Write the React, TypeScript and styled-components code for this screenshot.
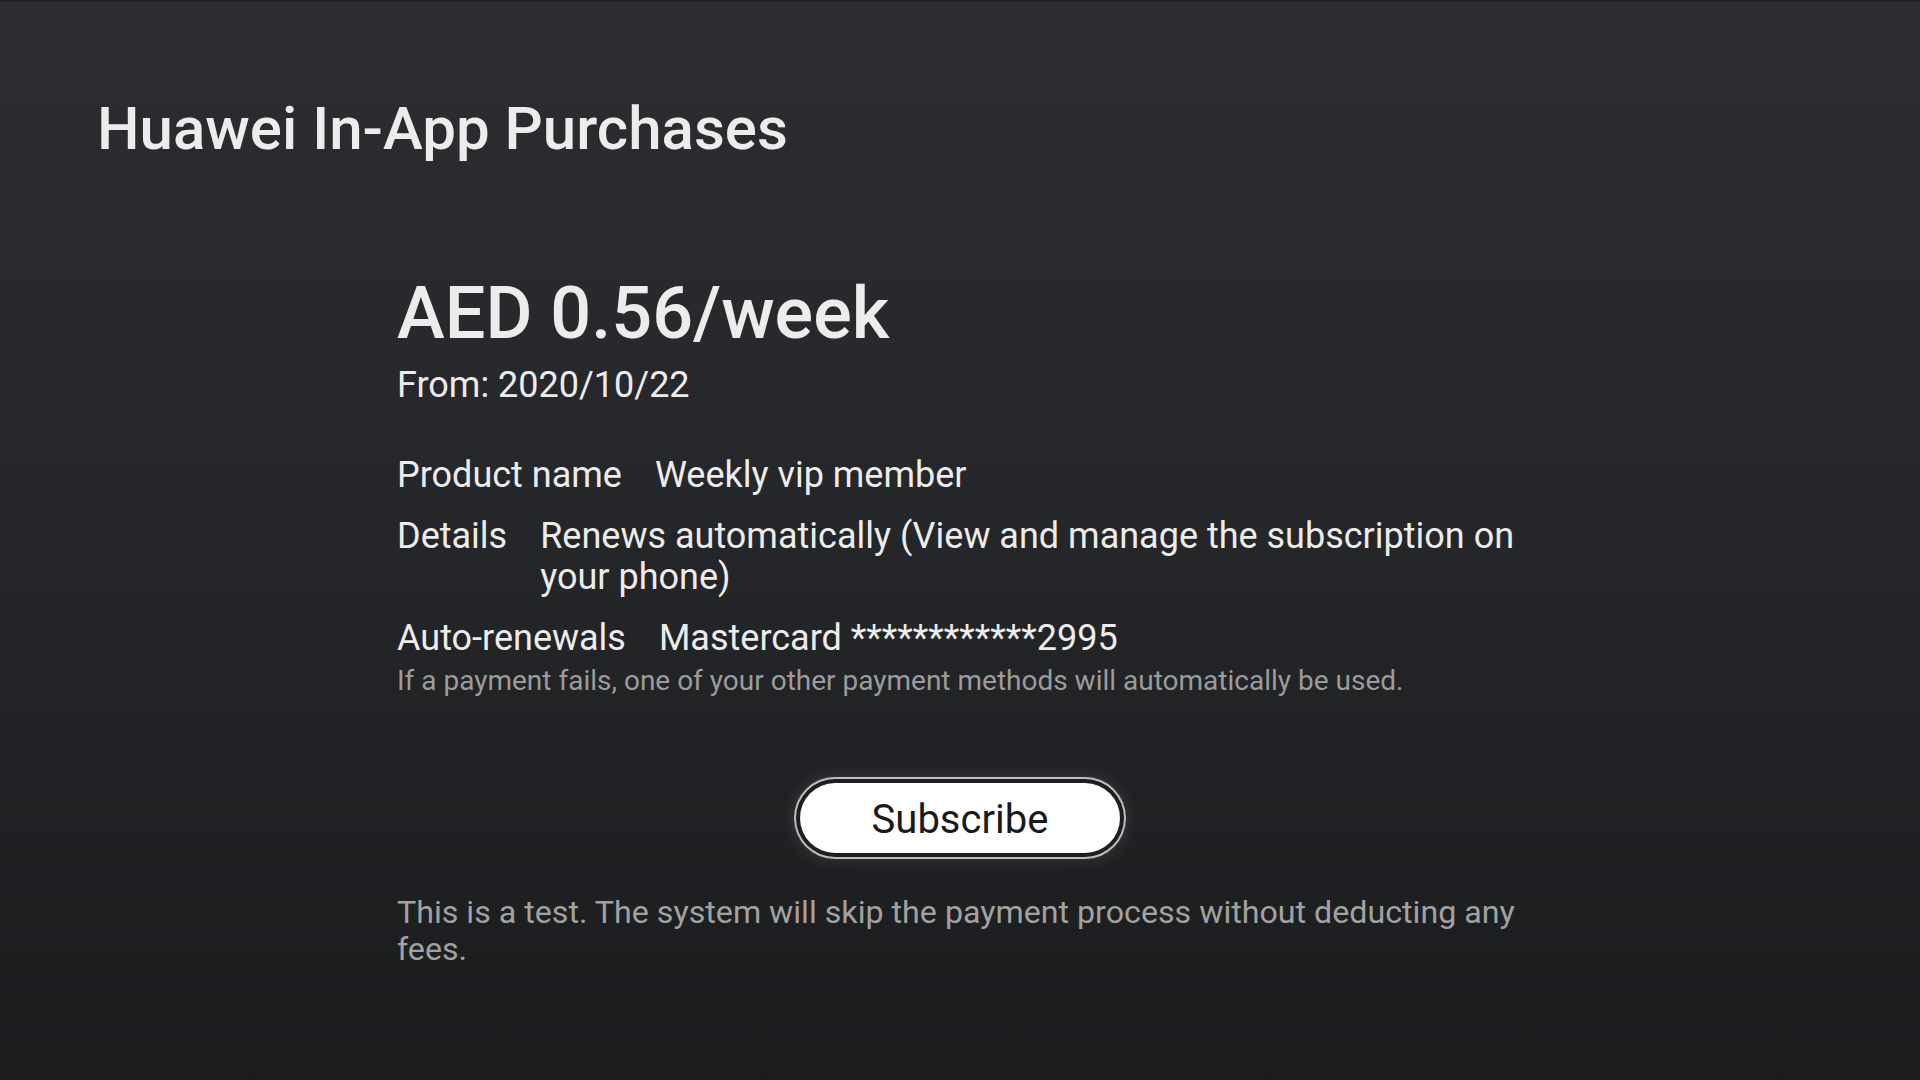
import React from 'react'
import styled, { createGlobalStyle } from 'styled-components'

type Detail = {
  label: string
  value: string
}

const details: Detail[] = [
  { label: 'Product name', value: 'Weekly vip member' },
  { label: 'Details', value: 'Renews automatically (View and manage the subscription on your phone)' },
  { label: 'Auto-renewals', value: 'Mastercard ************2995' },
]

function App() {
  return (
    <>
      <GlobalStyle />
      <Screen>
        <Title>Huawei In-App Purchases</Title>
        <Content>
          <Price>AED 0.56/week</Price>
          <StartDate>From: 2020/10/22</StartDate>
          <DetailList>
            {details.map((d) => (
              <DetailRow key={d.label}>
                <Label>{d.label}</Label>
                <Value>{d.value}</Value>
              </DetailRow>
            ))}
          </DetailList>
          <Hint>If a payment fails, one of your other payment methods will automatically be used.</Hint>
          <ButtonRow>
            <SubscribeButton type='button'>Subscribe</SubscribeButton>
          </ButtonRow>
          <Notice>This is a test. The system will skip the payment process without deducting any fees.</Notice>
        </Content>
      </Screen>
    </>
  )
}

export default App

const GlobalStyle = createGlobalStyle`
  html, body {
    margin: 0;
    padding: 0;
    background: #1b1c1e;
  }
  body {
    font-family: Roboto, 'Noto Sans', 'Liberation Sans', sans-serif;
    -webkit-font-smoothing: antialiased;
  }
`

const Screen = styled.div`
  box-sizing: border-box;
  width: 1920px;
  height: 1080px;
  padding: 89px 0 0 97px;
  background: linear-gradient(180deg, #2c2d31 0%, #26272a 45%, #1b1c1e 100%);
  border-top: 2px solid #232427;
  color: #ececec;
  overflow: hidden;
`

const Title = styled.h1`
  margin: 0;
  font-size: 60px;
  line-height: 76px;
  font-weight: 500;
  color: #ececec;
`

const Content = styled.div`
  width: 1126px;
  margin: 105px 0 0 300px;
  display: flex;
  flex-direction: column;
`

const Price = styled.div`
  font-size: 72px;
  line-height: 84px;
  font-weight: 500;
`

const StartDate = styled.div`
  margin-top: 7px;
  font-size: 36px;
  line-height: 44px;
`

const DetailList = styled.div`
  margin-top: 48px;
  display: flex;
  flex-direction: column;
  gap: 20px;
`

const DetailRow = styled.div`
  display: flex;
  gap: 33px;
  font-size: 36px;
  line-height: 41px;
`

const Label = styled.span`
  flex: none;
`

const Value = styled.span`
  flex: 1;
`

const Hint = styled.div`
  margin-top: 5px;
  font-size: 28px;
  line-height: 34px;
  color: #9c9c9c;
`

const ButtonRow = styled.div`
  margin-top: 85px;
  display: flex;
  justify-content: center;
`

const SubscribeButton = styled.button`
  width: 320px;
  height: 70px;
  border: none;
  border-radius: 35px;
  background: #ffffff;
  color: #1a1a1a;
  font-family: inherit;
  font-size: 40px;
  font-weight: 400;
  padding-top: 3px;
  box-shadow:
    0 0 0 4px #1d1e20,
    0 0 0 6px #bdbdbd,
    0 0 14px 8px rgba(255, 255, 255, 0.1);
  cursor: pointer;
`

const Notice = styled.div`
  margin-top: 41px;
  font-size: 32.2px;
  line-height: 37px;
  color: #a2a2a2;
`
